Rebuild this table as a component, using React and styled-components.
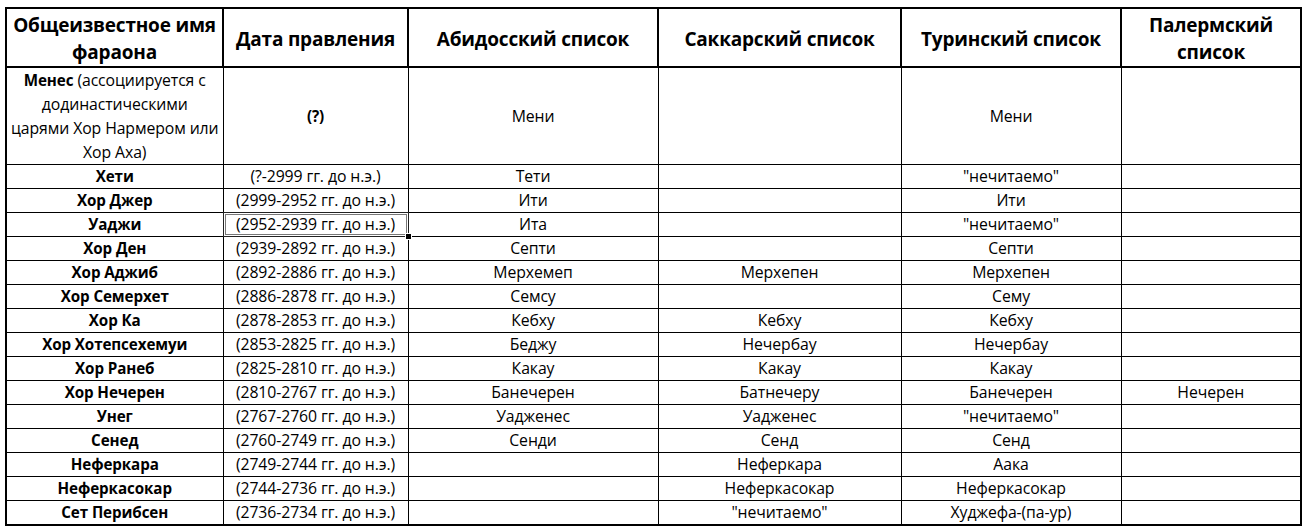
import React from "react";
import styled, { createGlobalStyle } from "styled-components";

const GlobalStyle = createGlobalStyle`
  html, body { margin: 0; padding: 0; background: #fff; }
  body { font-family: "Open Sans", "Noto Sans", sans-serif; color: #000; }
`;

const Page = styled.div`
  width: 1306px;
  height: 528px;
  padding: 7px 0 0 5px;
  box-sizing: border-box;
  background: #fff;
`;

const Table = styled.table`
  border-collapse: collapse;
  table-layout: fixed;
  width: 1295px;
  border: 2px solid #000;
`;

const HeadCell = styled.th`
  height: 53px;
  padding: 3px 2px 0;
  border: 2px solid #000;
  font-size: 19px;
  font-weight: 700;
  line-height: 27px;
  text-align: center;
  vertical-align: middle;
  letter-spacing: -0.2px;
`;

const Cell = styled.td`
  position: relative;
  height: ${(p) => (p.$tall ? "96px" : "23px")};
  padding: 0 1px;
  border: 1px solid #000;
  border-left-width: ${(p) => (p.$first ? "2px" : "1px")};
  font-size: ${(p) => (p.$bold ? "15.2px" : "15.8px")};
  line-height: 23px;
  font-weight: ${(p) => (p.$bold ? 700 : 400)};
  text-align: center;
  vertical-align: middle;
  white-space: nowrap;
  letter-spacing: -0.1px;
`;

const TallText = styled.div`
  font-size: 15.8px;
  line-height: 24px;
  white-space: nowrap;
`;

const Strong = styled.b`
  font-weight: 700;
  font-size: 15.2px;
`;

const Selection = styled.span`
  position: absolute;
  inset: -1px;
  border: 1px solid #222;
  box-shadow: inset 0 0 0 1px #fff, inset 0 0 0 2px #777;
  pointer-events: none;
`;

const Handle = styled.span`
  position: absolute;
  right: -4px;
  bottom: -4px;
  width: 5px;
  height: 5px;
  background: #000;
  border: 1px solid #fff;
`;

const cols = [217, 185, 250, 243, 220, 180];

const headers = [
  "Общеизвестное имя фараона",
  "Дата правления",
  "Абидосский список",
  "Саккарский список",
  "Туринский список",
  "Палермский список",
];

const rows = [
  ["Хети", "(?-2999 гг. до н.э.)", "Тети", "", "\"нечитаемо\"", ""],
  ["Хор Джер", "(2999-2952 гг. до н.э.)", "Ити", "", "Ити", ""],
  ["Уаджи", "(2952-2939 гг. до н.э.)", "Ита", "", "\"нечитаемо\"", ""],
  ["Хор Ден", "(2939-2892 гг. до н.э.)", "Септи", "", "Септи", ""],
  ["Хор Аджиб", "(2892-2886 гг. до н.э.)", "Мерхемеп", "Мерхепен", "Мерхепен", ""],
  ["Хор Семерхет", "(2886-2878 гг. до н.э.)", "Семсу", "", "Сему", ""],
  ["Хор Ка", "(2878-2853 гг. до н.э.)", "Кебху", "Кебху", "Кебху", ""],
  ["Хор Хотепсехемуи", "(2853-2825 гг. до н.э.)", "Беджу", "Нечербау", "Нечербау", ""],
  ["Хор Ранеб", "(2825-2810 гг. до н.э.)", "Какау", "Какау", "Какау", ""],
  ["Хор Нечерен", "(2810-2767 гг. до н.э.)", "Банечерен", "Батнечеру", "Банечерен", "Нечерен"],
  ["Унег", "(2767-2760 гг. до н.э.)", "Уадженес", "Уадженес", "\"нечитаемо\"", ""],
  ["Сенед", "(2760-2749 гг. до н.э.)", "Сенди", "Сенд", "Сенд", ""],
  ["Неферкара", "(2749-2744 гг. до н.э.)", "", "Неферкара", "Аака", ""],
  ["Неферкасокар", "(2744-2736 гг. до н.э.)", "", "Неферкасокар", "Неферкасокар", ""],
  ["Сет Перибсен", "(2736-2734 гг. до н.э.)", "", "\"нечитаемо\"", "Худжефа-(па-ур)", ""],
];

export default function App() {
  return (
    <>
      <GlobalStyle />
      <Page>
        <Table>
          <colgroup>
            {cols.map((w, i) => (
              <col key={i} style={{ width: w }} />
            ))}
          </colgroup>
          <thead>
            <tr>
              {headers.map((h) => (
                <HeadCell key={h}>{h}</HeadCell>
              ))}
            </tr>
          </thead>
          <tbody>
            <tr>
              <Cell $tall $first>
                <TallText>
                  <Strong>Менес</Strong> (ассоциируется с
                  <br />
                  додинастическими
                  <br />
                  царями Хор Нармером или
                  <br />
                  Хор Аха)
                </TallText>
              </Cell>
              <Cell $tall $bold>(?)</Cell>
              <Cell $tall>Мени</Cell>
              <Cell $tall></Cell>
              <Cell $tall>Мени</Cell>
              <Cell $tall></Cell>
            </tr>
            {rows.map((r, ri) => (
              <tr key={ri}>
                {r.map((v, ci) => (
                  <Cell key={ci} $bold={ci === 0} $first={ci === 0}>
                    {v}
                    {ri === 2 && ci === 1 && (
                      <Selection>
                        <Handle />
                      </Selection>
                    )}
                  </Cell>
                ))}
              </tr>
            ))}
          </tbody>
        </Table>
      </Page>
    </>
  );
}
